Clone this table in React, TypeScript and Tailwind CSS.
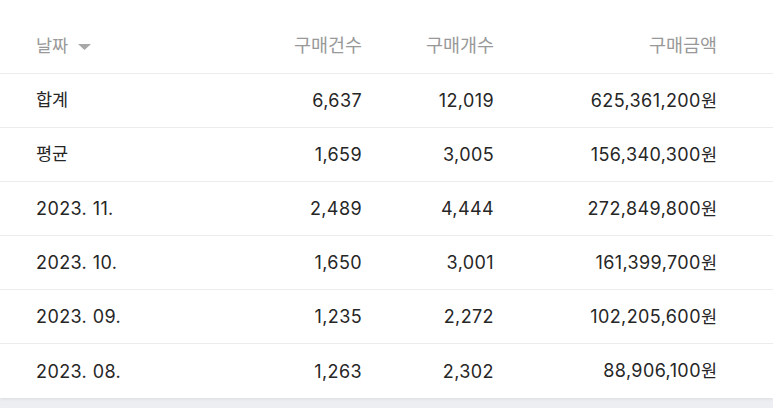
import React from 'react';

type Row = { label: string; count: string; qty: string; amount: string };

const rows: Row[] = [
    { label: '합계', count: '6,637', qty: '12,019', amount: '625,361,200' },
    { label: '평균', count: '1,659', qty: '3,005', amount: '156,340,300' },
    { label: '2023. 11.', count: '2,489', qty: '4,444', amount: '272,849,800' },
    { label: '2023. 10.', count: '1,650', qty: '3,001', amount: '161,399,700' },
    { label: '2023. 09.', count: '1,235', qty: '2,272', amount: '102,205,600' },
    { label: '2023. 08.', count: '1,263', qty: '2,302', amount: '88,906,100' },
];

const grid = 'grid grid-cols-[200px_126px_132px_223px] items-center pl-[36px] pr-[56px]';
const num = 'text-[18px] tracking-[0.4px]';

const isKorean = (s: string) => /[가-힣]/.test(s);

const App: React.FC = () => {
    return (
        <div
            className="min-h-[408px] w-[773px] bg-[#eceef1]"
            style={{ fontFamily: 'Inter, "Noto Sans CJK KR", sans-serif' }}
        >
            <div className="bg-white pt-[19px] shadow-[0_1px_3px_rgba(0,0,0,0.08)]">
                {/* Header */}
                <div className={`${grid} h-[55px] border-b border-[#ececec] text-[18.5px] text-[#999999]`}>
                    <div className="flex items-center gap-[10px]">
                        <span className="text-[17.5px]">날짜</span>
                        <svg width="13" height="6" viewBox="0 0 13 6" className="mt-[1px]">
                            <path d="M0 0h13L6.5 6z" fill="#a8a8a8" />
                        </svg>
                    </div>
                    <div className="text-right">구매건수</div>
                    <div className="text-right">구매개수</div>
                    <div className="text-right">구매금액</div>
                </div>

                {/* Body */}
                {rows.map((r) => (
                    <div
                        key={r.label}
                        className={`${grid} h-[54px] border-b border-[#ececec] text-[#262626] last:border-b-0`}
                    >
                        <div className={isKorean(r.label) ? 'text-[17.5px]' : num}>{r.label}</div>
                        <div className={`text-right ${num}`}>{r.count}</div>
                        <div className={`text-right ${num}`}>{r.qty}</div>
                        <div className="text-right">
                            <span className={num}>{r.amount}</span>
                            <span className="text-[17.5px]">원</span>
                        </div>
                    </div>
                ))}
            </div>
        </div>
    );
};

export default App;
